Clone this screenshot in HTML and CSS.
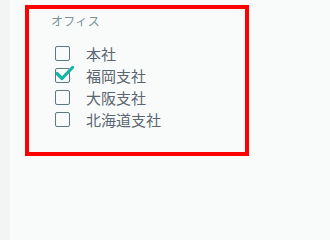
FILE: index.html
```html
<!DOCTYPE html>
<html lang="ja">
<head>
<meta charset="utf-8">
<link rel="stylesheet" href="styles.css">
</head>
<body>
<div class="rail"></div>
<main class="main">
  <section class="panel">
    <div class="title">オフィス</div>
    <ul class="list">
      <li class="item"><span class="box"></span><span class="label">本社</span></li>
      <li class="item"><span class="box checked"><svg class="tick" viewBox="0 0 20 16" width="20" height="16"><path d="M2 8.5 L7 13.5 L17.5 2.5" fill="none" stroke="#17b3a7" stroke-width="3.2" stroke-linecap="round" stroke-linejoin="round"/></svg></span><span class="label">福岡支社</span></li>
      <li class="item"><span class="box"></span><span class="label">大阪支社</span></li>
      <li class="item"><span class="box"></span><span class="label">北海道支社</span></li>
    </ul>
  </section>
</main>
</body>
</html>
```
FILE: styles.css
```css
html, body {
  margin: 0;
  padding: 0;
  height: 100%;
}
body {
  display: flex;
  background: #f9fbfb;
  font-family: "Noto Sans CJK JP", "Noto Sans", sans-serif;
}
.rail {
  width: 10px;
  flex: none;
  background: #f3f5f5;
}
.main {
  flex: 1;
  padding: 5px 0 0 15px;
}
.panel {
  box-sizing: border-box;
  width: 224px;
  height: 151px;
  border: 4px solid #ff0000;
  padding: 3px 0 0 22px;
}
.title {
  font-size: 12px;
  line-height: 18px;
  color: #7b9196;
  letter-spacing: 0.3px;
}
.list {
  list-style: none;
  margin: 12px 0 0 4px;
  padding: 0;
}
.item {
  display: flex;
  align-items: center;
  height: 22px;
}
.box {
  position: relative;
  box-sizing: border-box;
  width: 15px;
  height: 15px;
  border: 1.5px solid #5e7880;
  border-radius: 2px;
  flex: none;
}
.tick {
  position: absolute;
  left: -1.5px;
  top: -4px;
}
.label {
  margin-left: 16px;
  font-size: 15px;
  color: #5b6670;
}
```
